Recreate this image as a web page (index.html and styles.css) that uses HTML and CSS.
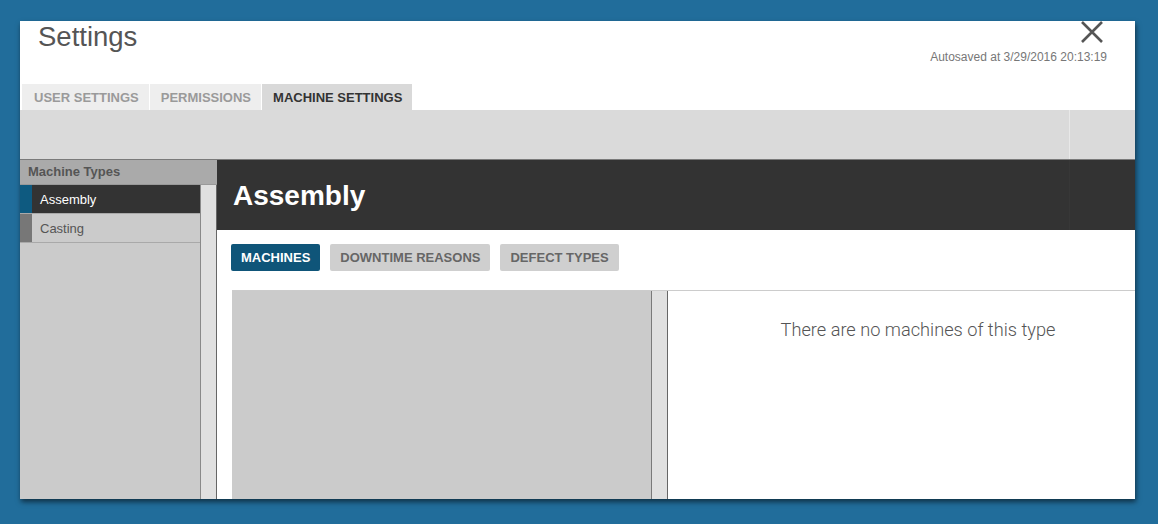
FILE: index.html
```html
<!DOCTYPE html>
<html>
<head>
<meta charset="utf-8">
<link rel="stylesheet" href="styles.css">
</head>
<body>
<div class="panel">
  <header class="top">
    <h1 class="title">Settings</h1>
    <div class="meta">
      <button class="close" aria-label="Close">
        <svg width="22" height="22" viewBox="0 0 22 22"><path d="M1 1 L21 21 M21 1 L1 21" stroke="#555" stroke-width="2.6" fill="none"/></svg>
      </button>
      <div class="autosave">Autosaved at 3/29/2016 20:13:19</div>
    </div>
  </header>
  <nav class="tabs">
    <div class="tab first">USER SETTINGS</div>
    <div class="tab">PERMISSIONS</div>
    <div class="tab active">MACHINE SETTINGS</div>
  </nav>
  <div class="toolbar"><div class="toolbar-fill"></div><div class="toolbar-end"></div></div>
  <div class="body">
    <aside class="sidebar">
      <div class="side-head">Machine Types</div>
      <div class="side-main">
        <ul class="types">
          <li class="type active"><span class="accent"></span><span class="type-name">Assembly</span></li>
          <li class="type"><span class="accent"></span><span class="type-name">Casting</span></li>
        </ul>
        <div class="scroll"></div>
      </div>
    </aside>
    <main class="content">
      <div class="content-head"><h2 class="content-title">Assembly</h2><div class="head-end"></div></div>
      <div class="subtabs">
        <div class="subtab active">MACHINES</div>
        <div class="subtab">DOWNTIME REASONS</div>
        <div class="subtab">DEFECT TYPES</div>
      </div>
      <div class="split">
        <div class="list"><div class="list-fill"></div><div class="scroll"></div></div>
        <div class="detail">There are no machines of this type</div>
      </div>
    </main>
  </div>
</div>
</body>
</html>
```
FILE: styles.css
```css
* { box-sizing: border-box; }
html, body { margin: 0; padding: 0; }
body {
  background: #216d9b;
  font-family: "Liberation Sans", Arial, sans-serif;
  height: 524px;
  overflow: hidden;
}
.panel {
  margin: 21px 0 0 20px;
  width: 1115px;
  height: 478px;
  background: #fff;
  overflow: hidden;
  display: flex;
  flex-direction: column;
  box-shadow: 1px 3px 5px rgba(0,0,0,0.55);
}
.top {
  height: 63px;
  display: flex;
  justify-content: space-between;
  flex: none;
}
.title {
  margin: 0 0 0 18px;
  font-size: 27.5px;
  line-height: 32px;
  font-weight: normal;
  color: #555;
}
.meta {
  display: flex;
  flex-direction: column;
  align-items: flex-end;
  padding-right: 28px;
}
.close {
  border: 0;
  padding: 0;
  margin: 0 4px 0 0;
  background: transparent;
  width: 22px;
  height: 22px;
  display: block;
}
.close svg { display: block; }
.autosave {
  margin-top: 7px;
  font-size: 12px;
  line-height: 14px;
  color: #777;
}
.tabs {
  display: flex;
  gap: 1px;
  padding-left: 2px;
  height: 26px;
  flex: none;
}
.tab {
  background: #eee;
  color: #9a9a9a;
  font-weight: bold;
  font-size: 13px;
  padding: 2px 10px 0 11px;
  line-height: 24px;
}
.tab.first { padding-left: 12px; }
.tab.active {
  background: #d9d9d9;
  color: #333;
}
.toolbar {
  height: 49px;
  background: #dadada;
  display: flex;
  flex: none;
}
.toolbar-fill { flex: 1; }
.toolbar-end { width: 66px; border-left: 1px solid #e8e8e8; }
.body {
  flex: 1;
  display: flex;
  border-top: 1px solid #7a7a7a;
  min-height: 0;
}
.sidebar {
  width: 197px;
  flex: none;
  display: flex;
  flex-direction: column;
  background: #cbcbcb;
}
.side-head {
  height: 25px;
  background: #aaa;
  border-bottom: 1px solid #999;
  color: #555;
  font-weight: bold;
  font-size: 13px;
  line-height: 24px;
  padding-left: 8px;
}
.side-main {
  flex: 1;
  display: flex;
}
.types {
  list-style: none;
  margin: 0;
  padding: 0;
  width: 180px;
}
.type {
  height: 29px;
  display: flex;
  align-items: center;
  border-bottom: 1px solid #a9a9a9;
  font-size: 13px;
  color: #555;
  background: #cbcbcb;
}
.type .accent {
  width: 12px;
  align-self: stretch;
  background: #777;
  margin-right: 8px;
}
.type.active { background: #333; color: #fff; }
.type.active .accent { background: #0e5a80; }
.scroll {
  width: 17px;
  background: #e0e0e0;
  border-left: 1px solid #8a8a8a;
  border-right: 1px solid #666;
}
.content {
  flex: 1;
  display: flex;
  flex-direction: column;
  min-width: 0;
}
.content-head {
  height: 70px;
  background: #333;
  display: flex;
  flex: none;
}
.content-title {
  flex: 1;
  margin: 0;
  padding-left: 16px;
  font-size: 28px;
  line-height: 71px;
  color: #fff;
  font-weight: bold;
}
.head-end { width: 66px; border-left: 1px solid #373737; }
.subtabs {
  display: flex;
  gap: 10px;
  padding: 14px 0 0 14px;
  flex: none;
}
.subtab {
  height: 27px;
  line-height: 27px;
  padding: 0 10px;
  border-radius: 2px;
  background: #cfcfcf;
  color: #666;
  font-weight: bold;
  font-size: 13px;
}
.subtab.active {
  background: #0f5579;
  color: #fff;
}
.split {
  margin: 19px 0 0 15px;
  border-top: 1px solid #ccc;
  flex: 1;
  display: flex;
  min-height: 0;
}
.list {
  width: 436px;
  display: flex;
  flex: none;
}
.list-fill {
  flex: 1;
  background: #cbcbcb;
}
.list .scroll {
  border-left: 1px solid #7a7a7a;
  border-right: 1px solid #666;
}
.detail {
  flex: 1;
  padding: 29px 0 0 33px;
  text-align: center;
  font-family: Roboto, "Liberation Sans", sans-serif;
  font-weight: 300;
  font-size: 18.2px;
  line-height: 20px;
  color: #555;
}
```
